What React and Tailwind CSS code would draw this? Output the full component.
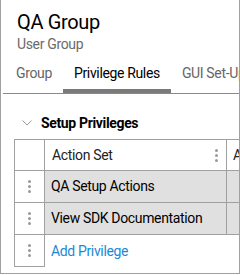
import React from "react";

const font = { fontFamily: "Roboto, 'Liberation Sans', sans-serif" };

function Kebab({ className = "" }) {
  return (
    <div className={`flex flex-col items-center gap-[2px] ${className}`}>
      <span className="block w-[3px] h-[3px] rounded-full bg-[#9a9a9a]" />
      <span className="block w-[3px] h-[3px] rounded-full bg-[#9a9a9a]" />
      <span className="block w-[3px] h-[3px] rounded-full bg-[#9a9a9a]" />
    </div>
  );
}

export default function App() {
  const tabs = [
    { label: "Group", active: false },
    { label: "Privilege Rules", active: true },
    { label: "GUI Set-Up", active: false },
  ];

  const rows = ["QA Setup Actions", "View SDK Documentation"];

  return (
    <div
      className="w-[240px] h-[274px] bg-white border-x border-b border-[#a0a0a0] overflow-hidden tracking-[-0.35px]"
      style={font}
    >
      {/* Header */}
      <div className="pl-[16px] pt-[10px]">
        <h1 className="text-[20px] leading-[24px] text-black">QA Group</h1>
        <p className="text-[14px] leading-[18px] text-[#6b6b6b] mt-[1px]">User Group</p>
      </div>

      {/* Tabs */}
      <div className="mt-[10px] ml-[2px] border-b border-[#8a8a8a] flex whitespace-nowrap">
        <div className="pl-[2px]" />
        {tabs.map((tab) => (
          <div
            key={tab.label}
            className={`px-[11px] pt-[1px] h-[30px] text-[14px] leading-[18px] border-b-4 shrink-0 ${
              tab.active
                ? "text-black border-[#7a7a7a]"
                : "text-[#666] border-transparent"
            }`}
          >
            {tab.label}
          </div>
        ))}
      </div>

      {/* Section */}
      <div className="flex items-center pl-[21px] pt-[14px] h-[44px]">
        <svg width="10" height="6" viewBox="0 0 10 6" className="mr-[9px]">
          <path d="M0.5 0.5 L5 5 L9.5 0.5" fill="none" stroke="#9a9a9a" strokeWidth="1" />
        </svg>
        <span className="text-[14px] font-bold text-black leading-[18px]">Setup Privileges</span>
      </div>

      {/* Table */}
      <div className="ml-[13px] mt-[1px] w-[300px] text-[14px]">
        <div className="flex h-[32px] border-t border-l border-[#a0a0a0]">
          <div className="w-[30px] shrink-0 border-r border-b border-[#a0a0a0]" />
          <div className="w-[182px] shrink-0 flex items-center justify-between pl-[7px] pr-[8px] border-r border-b border-[#a0a0a0] text-[#222]">
            <span>Action Set</span>
            <Kebab />
          </div>
          <div className="flex-1 flex items-center pl-[6px] border-b border-[#a0a0a0] text-[#222]">
            Action
          </div>
        </div>
        {rows.map((r) => (
          <div key={r} className="flex h-[32px] border-l border-[#a0a0a0]">
            <div className="w-[30px] shrink-0 flex items-center justify-center border-r border-b border-[#a0a0a0]">
              <Kebab />
            </div>
            <div className="w-[182px] shrink-0 flex items-center pl-[6px] bg-[#e0e0e0] border-r border-b border-[#a0a0a0] text-black">
              {r}
            </div>
            <div className="flex-1 bg-[#e0e0e0] border-b border-[#a0a0a0]" />
          </div>
        ))}
        <div className="flex h-[32px]">
          <div className="w-[31px] shrink-0 flex items-center justify-center border-l border-r border-b border-[#a0a0a0]">
            <Kebab />
          </div>
          <div className="flex items-center pl-[6px] text-[#1a8ad4]">Add Privilege</div>
        </div>
      </div>
    </div>
  );
}
